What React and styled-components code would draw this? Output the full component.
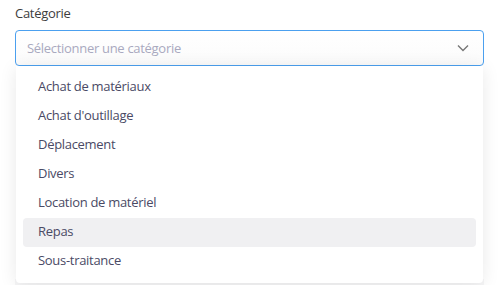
import React from "react";
import styled, { createGlobalStyle } from "styled-components";

const Global = createGlobalStyle`
  html, body { margin: 0; padding: 0; background: #ffffff; }
  body { font-family: "Open Sans", "Noto Sans", sans-serif; overflow: hidden; }
  * { box-sizing: border-box; }
`;

const Page = styled.div`
  position: relative;
  width: 503px;
  height: 285px;
  padding: 3px 19px 0 15px;
  display: flex;
  flex-direction: column;
  overflow: hidden;
`;

const Field = styled.div`
  position: relative;
  display: flex;
  flex-direction: column;
  gap: 7px;
`;

const Label = styled.label`
  font-size: 13px;
  letter-spacing: -0.3px;
  line-height: 20px;
  color: #3d3d3d;
`;

const SelectBox = styled.div`
  height: 36px;
  border: 1px solid #4ba0ef;
  border-radius: 4px;
  background: linear-gradient(#ffffff, #fbfbfb);
  display: flex;
  align-items: center;
  justify-content: space-between;
  padding: 0 14px 1px 11px;
`;

const Placeholder = styled.span`
  font-size: 13px;
  letter-spacing: -0.3px;
  color: #a9a9bf;
`;

const Menu = styled.ul`
  position: absolute;
  top: 63px;
  left: 1px;
  right: 1px;
  margin: 0;
  padding: 7px;
  list-style: none;
  background: #ffffff;
  border-radius: 0 0 4px 4px;
  box-shadow: 0 2px 18px rgba(0, 0, 0, 0.09);
  z-index: 2;
`;

const Item = styled.li`
  height: 29px;
  display: flex;
  align-items: center;
  padding: 0 15px 3px;
  border-radius: 4px;
  font-size: 13px;
  letter-spacing: -0.3px;
  color: #4a4a65;
  background: ${(p) => (p.$active ? "#f0f0f2" : "transparent")};
`;

const Row = styled.div`
  margin-top: 213px;
  display: grid;
  grid-template-columns: 241px 96px 1fr;
  background: #f6f6f7;
`;

const SmallLabel = styled.span`
  font-size: 13px;
  line-height: 20px;
  color: #4a4a65;
  padding-left: 1px;
`;

const Chevron = () => (
  <svg width="12" height="8" viewBox="0 0 12 8" fill="none">
    <path d="M1 1.5 L6 6.5 L11 1.5" stroke="#777" strokeWidth="1.4" />
  </svg>
);

const items = [
  "Achat de matériaux",
  "Achat d'outillage",
  "Déplacement",
  "Divers",
  "Location de matériel",
  "Repas",
  "Sous-traitance",
];

export default function App() {
  return (
    <>
      <Global />
      <Page>
        <Field>
          <Label>Catégorie</Label>
          <SelectBox>
            <Placeholder>Sélectionner une catégorie</Placeholder>
            <Chevron />
          </SelectBox>
          <Menu>
            {items.map((it) => (
              <Item key={it} $active={it === "Repas"}>
                {it}
              </Item>
            ))}
          </Menu>
        </Field>
        <Row>
          <SmallLabel>Montant HT</SmallLabel>
          <SmallLabel>Taux TVA</SmallLabel>
          <SmallLabel>Montant TTC</SmallLabel>
        </Row>
      </Page>
    </>
  );
}
